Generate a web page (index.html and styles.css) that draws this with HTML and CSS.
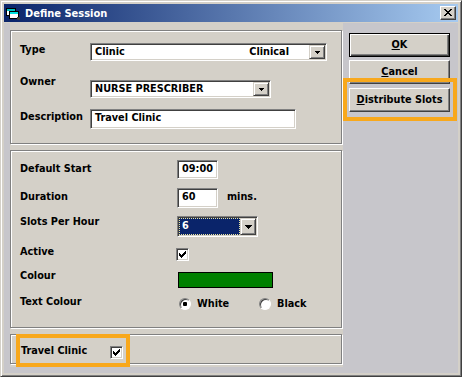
FILE: index.html
```html
<!DOCTYPE html>
<html>
<head>
<meta charset="utf-8">
<title>Define Session</title>
<link rel="stylesheet" href="styles.css">
</head>
<body>
<div class="window">
  <div class="titlebar">
    <svg class="appicon" width="16" height="16" viewBox="0 0 16 16" shape-rendering="crispEdges">
      <rect x="1" y="3" width="10" height="8" fill="#000"/>
      <rect x="2" y="4" width="8" height="2" fill="#00c0c0"/>
      <rect x="2" y="6" width="8" height="4" fill="#fff"/>
      <rect x="4" y="6" width="10" height="8" fill="#000"/>
      <rect x="5" y="7" width="8" height="2" fill="#00e0e0"/>
      <rect x="5" y="9" width="8" height="4" fill="#fff"/>
      <path d="M12 12h3v3h-3z" fill="#404040"/>
    </svg>
    <span class="title">Define Session</span>
    <div class="close">
      <svg width="8" height="7" viewBox="0 0 8 7" shape-rendering="crispEdges"><path d="M0 0h2v1H0zM6 0h2v1H6zM1 1h2v1H1zM5 1h2v1H5zM2 2h4v1H2zM3 3h2v1H3zM2 4h4v1H2zM1 5h2v1H1zM5 5h2v1H5zM0 6h2v1H0zM6 6h2v1H6z" fill="#000"/></svg>
    </div>
  </div>
  <div class="client">
    <div class="main">
      <div class="frame f1">
        <div class="row">
          <span class="lbl cap l-type">Type</span>
          <div class="combo sunken w-type">
            <span class="val grow">Clinic</span>
            <span class="val alt">Clinical</span>
            <span class="dd"><svg width="5" height="3" viewBox="0 0 5 3" shape-rendering="crispEdges"><path d="M0 0h5v1H0zM1 1h3v1H1zM2 2h1v1H2z"/></svg></span>
          </div>
        </div>
        <div class="row r-owner">
          <span class="lbl cap l-owner">Owner</span>
          <div class="combo sunken w-owner">
            <span class="val grow">NURSE PRESCRIBER</span>
            <span class="dd"><svg width="5" height="3" viewBox="0 0 5 3" shape-rendering="crispEdges"><path d="M0 0h5v1H0zM1 1h3v1H1zM2 2h1v1H2z"/></svg></span>
          </div>
        </div>
        <div class="row r-desc">
          <span class="lbl cap l-desc">Description</span>
          <div class="textbox sunken w-desc"><span class="val">Travel Clinic</span></div>
        </div>
      </div>

      <div class="frame f2">
        <div class="row">
          <span class="lbl cap l-m3">Default Start</span>
          <div class="textbox sunken w-time"><span class="val">09:00</span></div>
        </div>
        <div class="row r-dur">
          <span class="lbl cap l-m3">Duration</span>
          <div class="textbox sunken w-dur"><span class="val">60</span></div>
          <span class="lbl unit">mins.</span>
        </div>
        <div class="row r-slots">
          <span class="lbl cap">Slots Per Hour</span>
          <div class="combo sunken w-slots">
            <span class="sel"><span class="focus">6</span></span>
            <span class="dd dd-lg"><svg width="7" height="4" viewBox="0 0 7 4" shape-rendering="crispEdges"><path d="M0 0h7v1H0zM1 1h5v1H1zM2 2h3v1H2zM3 3h1v1H3z"/></svg></span>
          </div>
        </div>
        <div class="row r-active">
          <span class="lbl cap l-m-2">Active</span>
          <span class="check c-active"><svg width="7" height="7" viewBox="0 0 7 7" shape-rendering="crispEdges"><path d="M0 2h1v3H0zM1 3h1v3H1zM2 4h1v3H2zM3 3h1v3H3zM4 2h1v3H4zM5 1h1v3H5zM6 0h1v3H6z"/></svg></span>
        </div>
        <div class="row r-colour">
          <span class="lbl cap l-m-2">Colour</span>
          <span class="swatch"></span>
        </div>
        <div class="row r-text">
          <span class="lbl cap l-m-2">Text Colour</span>
          <div class="radios">
            <label class="opt"><span class="radio on"></span><span class="lbl">White</span></label>
            <label class="opt"><span class="radio"></span><span class="lbl">Black</span></label>
          </div>
        </div>
      </div>

      <div class="frame f3">
        <div class="row">
          <span class="lbl l-travel">Travel Clinic</span>
          <span class="check c-travel"><svg width="7" height="7" viewBox="0 0 7 7" shape-rendering="crispEdges"><path d="M0 2h1v3H0zM1 3h1v3H1zM2 4h1v3H2zM3 3h1v3H3zM4 2h1v3H4zM5 1h1v3H5zM6 0h1v3H6z"/></svg></span>
        </div>
      </div>
    </div>

    <div class="side">
      <div class="btn default"><span><u>O</u>K</span></div>
      <div class="btn b-cancel"><span><u>C</u>ancel</span></div>
      <div class="btn b-dist"><span><u>D</u>istribute Slots</span></div>
    </div>
  </div>
</div>
<div class="hl hl-slots"></div>
<div class="hl hl-travel"></div>
</body>
</html>
```

FILE: styles.css
```css
html, body {
  margin: 0;
  padding: 0;
}

body {
  width: 462px;
  height: 377px;
  overflow: hidden;
  position: relative;
  background: #d4d0c8;
  font-family: "DejaVu Sans Condensed", "DejaVu Sans", sans-serif;
  font-weight: bold;
  font-size: 10.8px;
  color: #000;
}

.window {
  box-sizing: border-box;
  width: 462px;
  height: 377px;
  border: 1px solid;
  border-color: #d4d0c8 #404040 #404040 #d4d0c8;
  box-shadow: inset 1px 1px 0 #fff, inset -1px -1px 0 #808080;
  padding: 3px;
  background: #d4d0c8;
}

/* title bar */
.titlebar {
  height: 18px;
  margin-bottom: 1px;
  display: flex;
  align-items: center;
  background: linear-gradient(to right, #0a246a 0%, #a6caf0 100%);
  color: #fff;
}

.appicon {
  margin-left: 1px;
  flex: none;
}

.title {
  margin-left: 4px;
  font-family: "DejaVu Sans Condensed", "DejaVu Sans", sans-serif;
  font-size: 11px;
  font-weight: bold;
  line-height: 13px;
}

.close {
  margin-left: auto;
  margin-right: 2px;
  box-sizing: border-box;
  width: 16px;
  height: 14px;
  border: 1px solid;
  border-color: #fff #404040 #404040 #fff;
  box-shadow: inset -1px -1px 0 #808080;
  background: #d4d0c8;
  display: flex;
  align-items: center;
  justify-content: center;
  padding: 0 1px 1px 0;
}

.close svg {
  display: block;
}

/* client area */
.client {
  display: flex;
  box-sizing: border-box;
  height: 350px;
  padding-left: 6px;
  background: #c7c6cb;
}

.main {
  box-sizing: border-box;
  width: 333px;
  height: 344px;
  padding-top: 7px;
  background: #d4d0c8;
}

.side {
  margin-left: 6px;
  padding-top: 10px;
  display: flex;
  flex-direction: column;
}

/* frames */
.frame {
  box-sizing: border-box;
  width: 332px;
  border: 1px solid #808080;
  box-shadow: inset 1px 1px 0 #fff, 1px 1px 0 #fff;
}

.f1 {
  height: 114px;
  padding: 12px 0 0 9px;
}

.f2 {
  height: 178px;
  margin-top: 6px;
  padding: 9px 0 0 9px;
}

.f3 {
  height: 30px;
  margin-top: 6px;
  padding: 10px 0 0 10px;
}

.row {
  display: flex;
  align-items: flex-start;
}

.lbl {
  line-height: 12px;
  white-space: nowrap;
}

.f1 .cap {
  width: 70px;
  flex: none;
}

.f2 .cap {
  width: 157px;
  flex: none;
}

.l-type { margin-top: 1px; }
.l-owner { margin-top: -4px; }
.l-desc { margin-top: 2px; }
.l-m3 { margin-top: 3px; }
.l-m-2 { margin-top: -2px; }

.r-owner { margin-top: 19px; }
.r-desc { margin-top: 11px; }

.r-dur { margin-top: 9px; }
.r-slots { margin-top: 8px; }
.r-active { margin-top: 11px; }
.r-colour { margin-top: 11px; }
.r-text { margin-top: 10px; }

/* sunken controls */
.sunken {
  box-sizing: border-box;
  border: 1px solid;
  border-color: #808080 #fff #fff #808080;
  box-shadow: inset 1px 1px 0 #404040, inset -1px -1px 0 #d4d0c8;
  background: #fff;
  padding: 1px;
}

.combo {
  display: flex;
  height: 18px;
}

.textbox {
  display: flex;
}

.val {
  line-height: 13px;
  padding-left: 3px;
  white-space: nowrap;
}

.textbox .val {
  line-height: 14px;
}

.grow {
  flex: 1;
}

.alt {
  margin-right: 20px;
}

.w-type { width: 237px; }
.w-owner { width: 181px; }
.w-desc { width: 206px; height: 20px; }
.w-time { width: 41px; height: 19px; flex: none; }
.w-dur { width: 41px; height: 20px; flex: none; }

.unit {
  margin-left: 9px;
  margin-top: 3px;
}

.dd {
  flex: none;
  box-sizing: border-box;
  width: 16px;
  height: 14px;
  border: 1px solid;
  border-color: #d4d0c8 #404040 #404040 #d4d0c8;
  box-shadow: inset 1px 1px 0 #fff, inset -1px -1px 0 #808080;
  background: #d4d0c8;
  display: flex;
  align-items: center;
  justify-content: center;
}

.dd svg {
  display: block;
}

.w-slots {
  width: 81px;
  height: 21px;
}

.dd-lg {
  height: 17px;
}

.sel {
  flex: 1;
  background: #0a246a;
  color: #fff;
  display: flex;
}

.focus {
  flex: 1;
  border: 1px dotted #e8e4a0;
  line-height: 13px;
  padding-left: 2px;
}

.check {
  box-sizing: border-box;
  width: 13px;
  height: 13px;
  border: 1px solid;
  border-color: #808080 #fff #fff #808080;
  box-shadow: inset 1px 1px 0 #404040, inset -1px -1px 0 #d4d0c8;
  background: #fff;
  display: flex;
  align-items: center;
  justify-content: center;
  flex: none;
}

.check svg {
  display: block;
}

.c-active {
  margin-left: -1px;
}

.swatch {
  box-sizing: border-box;
  width: 95px;
  height: 16px;
  margin-left: 1px;
  border: 1px solid #000;
  background: #008000;
}

.radios {
  display: flex;
  margin-left: 2px;
}

.opt {
  display: flex;
  align-items: flex-start;
  width: 80px;
}

.opt .lbl {
  margin-left: 6px;
}

.radio {
  box-sizing: border-box;
  width: 12px;
  height: 12px;
  border-radius: 50%;
  border: 1px solid;
  border-color: #808080 #fff #fff #808080;
  box-shadow: inset 1px 1px 0 #404040;
  background: #fff;
  display: flex;
  align-items: center;
  justify-content: center;
  flex: none;
}

.radio.on::after {
  content: "";
  width: 4px;
  height: 4px;
  border-radius: 1px;
  background: #000;
}

.l-travel {
  width: 89px;
  flex: none;
}

.c-travel {
  margin-top: 1px;
}

/* buttons */
.btn {
  box-sizing: border-box;
  width: 101px;
  height: 24px;
  border: 1px solid;
  border-color: #fff #404040 #404040 #fff;
  box-shadow: inset -1px -1px 0 #808080;
  background: #d4d0c8;
  display: flex;
  align-items: center;
  justify-content: center;
  line-height: 12px;
}

.btn.default {
  border-color: #000;
  box-shadow: inset 1px 1px 0 #fff, inset -1px -1px 0 #404040, inset -2px -2px 0 #808080;
}

.b-cancel { margin-top: 3px; }
.b-dist { margin-top: 4px; }

/* highlight overlays */
.hl {
  position: absolute;
  box-sizing: border-box;
  border: 4px solid #f8a81c;
}

.hl-slots {
  left: 343px;
  top: 78px;
  width: 114px;
  height: 43px;
}

.hl-travel {
  left: 16px;
  top: 334px;
  width: 114px;
  height: 33px;
}
```
